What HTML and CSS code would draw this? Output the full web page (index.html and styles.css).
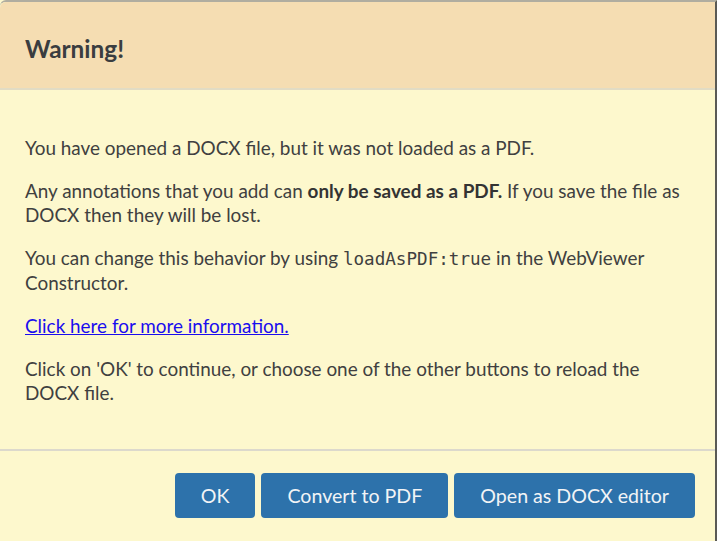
FILE: index.html
```html
<!DOCTYPE html>
<html>
<head>
<meta charset="utf-8">
<link rel="stylesheet" href="styles.css">
</head>
<body>
<div class="dialog">
  <div class="header"><h1 class="title">Warning!</h1></div>
  <div class="content">
    <p>You have opened a DOCX file, but it was not loaded as a PDF.</p>
    <p>Any annotations that you add can <b>only be saved as a PDF.</b> If you save the file as DOCX then they will be lost.</p>
    <p>You can change this behavior by using <code>loadAsPDF:true</code> in the WebViewer Constructor.</p>
    <p><a href="#" class="link">Click here for more information.</a></p>
    <p>Click on 'OK' to continue, or choose one of the other buttons to reload the DOCX file.</p>
  </div>
  <div class="footer">
    <button class="btn">OK</button>
    <button class="btn">Convert to PDF</button>
    <button class="btn">Open as DOCX editor</button>
  </div>
</div>
</body>
</html>
```
FILE: styles.css
```css
html, body {
  margin: 0;
  padding: 0;
  background: #fdf8cd;
}
.dialog {
  width: 717px;
  height: 541px;
  box-sizing: border-box;
  border-top: 2px solid #b0ada0;
  border-right: 2px solid #5a5a55;
  background: #fdf8cd;
  font-family: Lato, "Open Sans", sans-serif;
  color: #404040;
  display: flex;
  flex-direction: column;
  border-top-left-radius: 6px;
}
.header {
  height: 86px;
  flex-shrink: 0;
  background: #f5ddb2;
  border-bottom: 2px solid #e2dcc4;
  display: flex;
  align-items: center;
  padding-left: 25px;
  border-top-left-radius: 6px;
}
.title {
  margin: 0;
  margin-top: 7px;
  font-size: 24.4px;
  font-weight: 700;
  color: #3a3d40;
}
.content {
  padding: 46px 22px 0 25px;
  height: 359px;
  flex-shrink: 0;
  box-sizing: border-box;
}
.content p {
  margin: 0 0 19px 0;
  font-size: 18.9px;
  line-height: 24px;
}
.content b {
  font-weight: 700;
  color: #333;
}
code {
  font-family: "DejaVu Sans Mono", monospace;
  font-size: 17.6px;
}
.link {
  color: #1a0dee;
  text-decoration: underline;
}
.footer {
  border-top: 2px solid #dcd9cc;
  display: flex;
  justify-content: flex-end;
  gap: 6px;
  padding: 22px 20px 0 0;
}
.btn {
  height: 45px;
  background: #2d72ab;
  color: #f2f4f6;
  border: none;
  border-radius: 4px;
  font-family: Lato, sans-serif;
  font-size: 19.6px;
  padding: 0 26px;
}
```
